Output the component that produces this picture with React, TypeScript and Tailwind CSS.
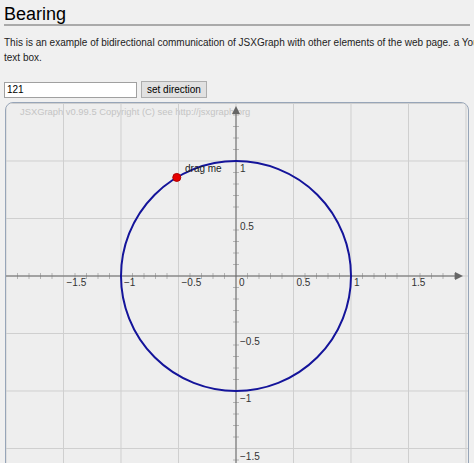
import React from "react";

// board geometry in page pixels
const OX = 236;
const OY = 276;
const UNIT = 115;

const px = (v: number) => OX + v * UNIT;
const py = (v: number) => OY - v * UNIT;

const majors = [-4, -3, -2, -1, 0, 1, 2, 3, 4];

function fmt(v: number) {
    return v < 0 ? `\u2212${Math.abs(v)}` : `${v}`;
}

function Board() {
    const minor: number[] = [];
    for (let k = -20; k <= 20; k++) {
        if (k % 5 !== 0) minor.push(k / 10);
    }
    const angle = (121 * Math.PI) / 180;
    const pX = px(Math.cos(angle));
    const pY = py(Math.sin(angle));

    return (
        <div className="ml-[1px] mt-[4px] h-[400px] w-[464px] overflow-hidden rounded-[8px] border border-[#97a5b8] bg-[#eeeeee]">
            <svg width={462} height={398} viewBox="6 103 462 398" className="block">
                <text x={20} y={115} fontSize={9.4} fill="#c4c4c4" fontFamily="Liberation Sans, Arial, sans-serif">
                    JSXGraph v0.99.5 Copyright (C) see http://jsxgraph.org
                </text>
                {/* grid */}
                {majors.map((k) => (
                    <line key={`gx${k}`} x1={px(k / 2)} y1={103} x2={px(k / 2)} y2={501} stroke="#cfcfcf" strokeWidth={1} />
                ))}
                {majors.map((k) => (
                    <line key={`gy${k}`} x1={6} y1={py(k / 2)} x2={468} y2={py(k / 2)} stroke="#cfcfcf" strokeWidth={1} />
                ))}
                {/* minor ticks */}
                {minor.map((v) => (
                    <line key={`tx${v}`} x1={px(v)} y1={OY - 3} x2={px(v)} y2={OY + 3} stroke="#b4b4b4" strokeWidth={1} />
                ))}
                {minor.map((v) => (
                    <line key={`ty${v}`} x1={OX - 3} y1={py(v)} x2={OX + 3} y2={py(v)} stroke="#b4b4b4" strokeWidth={1} />
                ))}
                {/* axes */}
                <line x1={6} y1={OY} x2={458} y2={OY} stroke="#666666" strokeWidth={1} />
                <path d={`M463 ${OY} L455 ${OY - 4} L455 ${OY + 4} Z`} fill="#666666" />
                <line x1={OX} y1={501} x2={OX} y2={112} stroke="#666666" strokeWidth={1} />
                <path d={`M${OX} 106 L${OX - 4} 114 L${OX + 4} 114 Z`} fill="#666666" />
                {/* labels */}
                {[-3, -2, -1, 0, 1, 2, 3].map((k) => (
                    <text key={`lx${k}`} x={px(k / 2) + 3} y={286} fontSize={10} fill="#333333" fontFamily="Liberation Sans, Arial, sans-serif">
                        {fmt(k / 2)}
                    </text>
                ))}
                {[2, 1, -1, -2, -3].map((k) => (
                    <text key={`ly${k}`} x={OX + 4} y={py(k / 2) + 11} fontSize={10} fill="#333333" fontFamily="Liberation Sans, Arial, sans-serif">
                        {fmt(k / 2)}
                    </text>
                ))}
                {/* circle and glider */}
                <circle cx={OX} cy={OY} r={UNIT} fill="none" stroke="#14149a" strokeWidth={2} />
                <circle cx={pX} cy={pY} r={4} fill="#e60000" stroke="#b00000" strokeWidth={1} />
                <text x={185} y={172} fontSize={10} fill="#222222" fontFamily="Liberation Sans, Arial, sans-serif">
                    drag me
                </text>
            </svg>
        </div>
    );
}

export default function App() {
    return (
        <div className="h-[463px] w-[474px] overflow-hidden bg-[#f0f0f0] px-[4px] font-['Liberation_Sans',Arial,sans-serif] text-black">
            <h1 className="border-b-2 border-[#aaaaaa] pt-[4px] text-[18px] leading-[20px] font-normal">Bearing</h1>
            <p className="mt-[9px] text-[10px] leading-[15px] text-[#222]">
                <span className="block whitespace-nowrap">
                    This is an example of bidirectional communication of JSXGraph with other elements of the web page. a You
                </span>
                <span className="block">text box.</span>
            </p>
            <div className="mt-[16px] flex items-center gap-[4px]">
                <input
                    defaultValue="121"
                    className="h-[16px] w-[133px] border border-[#a0a0a0] bg-white px-[2px] text-[10px] leading-[14px] outline-none"
                />
                <button className="h-[17px] border border-[#adadad] bg-[#e1e1e1] px-[5px] text-[10px] leading-[15px]">
                    set direction
                </button>
            </div>
            <Board />
        </div>
    );
}
